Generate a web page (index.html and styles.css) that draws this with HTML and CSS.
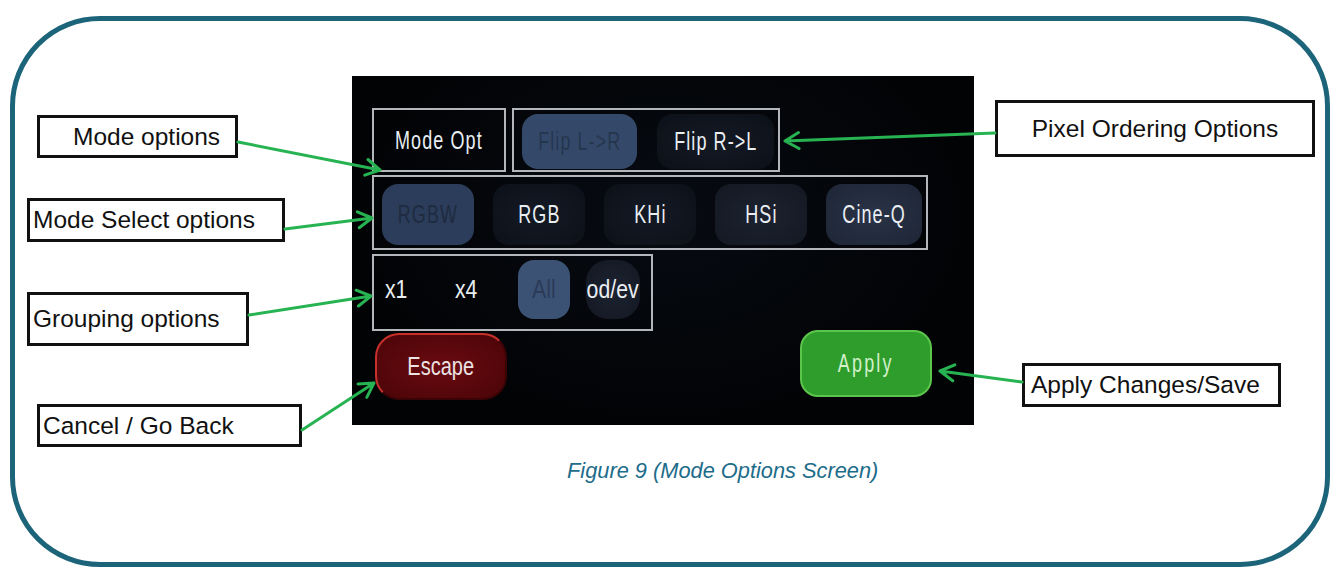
FILE: index.html
```html
<!DOCTYPE html>
<html>
<head>
<meta charset="utf-8">
<link rel="stylesheet" href="styles.css">
</head>
<body>
<div class="page">
  <div class="frame">
    <div class="figure-row">
      <div class="col-left">
        <div class="label lbl-mode">Mode options</div>
        <div class="label lbl-select">Mode Select options</div>
        <div class="label lbl-group">Grouping options</div>
        <div class="label lbl-cancel">Cancel / Go Back</div>
      </div>
      <div class="screen">
        <div class="row1">
          <div class="box box-modeopt"><span class="t">Mode Opt</span></div>
          <div class="box box-flip">
            <div class="btn flip1"><span class="t">Flip L-&gt;R</span></div>
            <div class="btn dark flip2"><span class="t">Flip R-&gt;L</span></div>
          </div>
        </div>
        <div class="box row2">
          <div class="btn sel m"><span class="t">RGBW</span></div>
          <div class="btn dark m"><span class="t">RGB</span></div>
          <div class="btn dark m"><span class="t">KHi</span></div>
          <div class="btn dark2 m"><span class="t">HSi</span></div>
          <div class="btn dark3 m wide"><span class="t">Cine-Q</span></div>
        </div>
        <div class="box row3">
          <div class="btn plain g1"><span class="t g">x1</span></div>
          <div class="btn plain g2"><span class="t g">x4</span></div>
          <div class="btn sel2 g3"><span class="t g">All</span></div>
          <div class="btn dark2 g4"><span class="t g">od/ev</span></div>
        </div>
        <div class="row4">
          <div class="btn escape"><span class="t e">Escape</span></div>
          <div class="btn apply"><span class="t a">Apply</span></div>
        </div>
      </div>
      <div class="col-right">
        <div class="label lbl-pixel">Pixel Ordering Options</div>
        <div class="label lbl-apply">Apply Changes/Save</div>
      </div>
    </div>
    <div class="caption">Figure 9 (Mode Options Screen)</div>
  </div>
  <svg class="arrows" width="1337" height="570" viewBox="0 0 1337 570">
    <g fill="none" stroke="#27b352" stroke-width="3" stroke-linecap="round" stroke-linejoin="round">
      <path d="M238 142 L380 170 M368 159.5 L380 170 L364.8 175.2"/>
      <path d="M995 133 L785 141 M799.1 148.5 L785 141 L798.5 132.5"/>
      <path d="M285 229 L372 218 M357.3 211.8 L372 218 L359.2 227.7"/>
      <path d="M249 315 L371 296 M356.1 290.2 L371 296 L358.5 306"/>
      <path d="M302 430 L374 383 M358 383.9 L374 383 L366.8 397.3"/>
      <path d="M1022 382 L940 371 M952.7 380.8 L940 371 L954.8 364.9"/>
    </g>
  </svg>
</div>
</body>
</html>
```

FILE: styles.css
```css
html, body {
  margin: 0;
  padding: 0;
  background: #ffffff;
}

.page {
  position: relative;
  width: 1337px;
  height: 570px;
  overflow: hidden;
  font-family: "Liberation Sans", Arial, sans-serif;
}

.frame {
  box-sizing: border-box;
  margin: 16px 0 0 10px;
  width: 1320px;
  height: 551px;
  border: 5px solid #1c6479;
  border-radius: 90px;
  padding-top: 55px;
}

.figure-row {
  display: flex;
  align-items: flex-start;
}

.col-left {
  width: 337px;
  display: flex;
  flex-direction: column;
  align-items: flex-start;
}

.col-right {
  flex: 1;
  display: flex;
  flex-direction: column;
  align-items: flex-start;
}

.label {
  box-sizing: border-box;
  border: 3px solid #111111;
  background: #ffffff;
  color: #111111;
  font-size: 24.5px;
  display: flex;
  align-items: center;
  padding-left: 3px;
  white-space: nowrap;
}

.lbl-mode { margin: 39px 0 0 22px; width: 201px; height: 43px; padding-left: 33px; }
.lbl-select { margin: 40px 0 0 12px; width: 258px; height: 44px; }
.lbl-group { margin: 50px 0 0 12px; width: 222px; height: 54px; }
.lbl-cancel { margin: 58px 0 0 22px; width: 265px; height: 43px; }

.lbl-pixel { margin: 24px 0 0 21px; width: 320px; height: 57px; justify-content: center; padding-left: 0; }
.lbl-apply { margin: 206px 0 0 48px; width: 259px; height: 44px; padding-left: 6px; }

.caption {
  margin-top: 12px;
  padding-left: 552px;
  font-size: 21.8px;
  line-height: 24px;
  font-style: italic;
  color: #1d6c8a;
}

/* LCD screen */
.screen {
  box-sizing: border-box;
  width: 622px;
  height: 349px;
  background: radial-gradient(ellipse at 50% 40%, #070b12 0%, #020305 70%);
  padding: 32px 0 0 20px;
  display: flex;
  flex-direction: column;
  align-items: flex-start;
}

.box {
  box-sizing: border-box;
  border: 2px solid #b3b7bb;
}

.row1 {
  display: flex;
  gap: 6px;
}

.box-modeopt {
  width: 134px;
  height: 64px;
  display: flex;
  align-items: center;
  justify-content: center;
  color: #e8edf2;
}

.box-flip {
  width: 268px;
  height: 64px;
  display: flex;
  align-items: flex-start;
  padding: 4px 0 0 8px;
  gap: 20px;
}

.btn {
  box-sizing: border-box;
  display: flex;
  align-items: center;
  justify-content: center;
  border-radius: 16px;
  color: #eaeef2;
}

.t {
  display: inline-block;
  font-family: "Liberation Sans", Arial, sans-serif;
  font-size: 25px;
  letter-spacing: 1.5px;
  transform: scaleX(0.72);
  white-space: nowrap;
}

.t.g { letter-spacing: 0; transform: scaleX(0.85); }
.t.e { letter-spacing: 0; transform: scaleX(0.8); }
.t.a { letter-spacing: 3px; transform: scaleX(0.72); }

.btn.sel {
  background: #2b3d5a;
  color: #1f2b40;
}
.btn.sel2 {
  background: #3c5275;
  color: #2a3b58;
}
.btn.flip1 {
  background: #34496a;
  color: #26364f;
}
.dark {
  background: radial-gradient(ellipse at 50% 50%, #141a25 0%, #0c1018 100%);
}
.dark2 {
  background: radial-gradient(ellipse at 50% 50%, #1c2230 0%, #131822 100%);
}
.dark3 {
  background: radial-gradient(ellipse at 50% 50%, #2a3448 0%, #1d2535 100%);
}
.plain {
  background: transparent;
}

.flip1 { width: 115px; height: 55px; }
.flip2 { width: 117px; height: 55px; }

.row2 {
  margin-top: 3px;
  width: 556px;
  height: 75px;
  display: flex;
  align-items: flex-start;
  padding: 7px 0 0 8px;
  gap: 19px;
}
.m { width: 92px; height: 61px; }
.m.wide { width: 96px; }

.row3 {
  margin-top: 4px;
  width: 281px;
  height: 77px;
  display: flex;
  align-items: flex-start;
  padding: 4px 0 0 0;
}
.g1 { width: 44px; height: 59px; }
.g2 { width: 44px; height: 59px; margin-left: 26px; }
.g3 { width: 52px; height: 59px; margin-left: 30px; }
.g4 { width: 54px; height: 59px; margin-left: 16px; border-radius: 22px; }

.row4 {
  margin-top: 2px;
  display: flex;
  align-items: flex-start;
}

.escape {
  margin-left: 3px;
  width: 132px;
  height: 67px;
  border-radius: 24px;
  background: radial-gradient(ellipse at 50% 50%, #6a0a10 0%, #4a0508 100%);
  border: 2px solid #3a0406;
  border-top-color: #c8302c;
  border-left-color: #c8302c;
  color: #ece2e2;
}

.apply {
  margin-left: 293px;
  margin-top: -3px;
  width: 132px;
  height: 67px;
  border-radius: 18px;
  background: #2f9d2b;
  border: 2px solid #5cc64c;
  color: #d2f0ca;
}

.arrows {
  position: absolute;
  left: 0;
  top: 0;
  pointer-events: none;
}
```
